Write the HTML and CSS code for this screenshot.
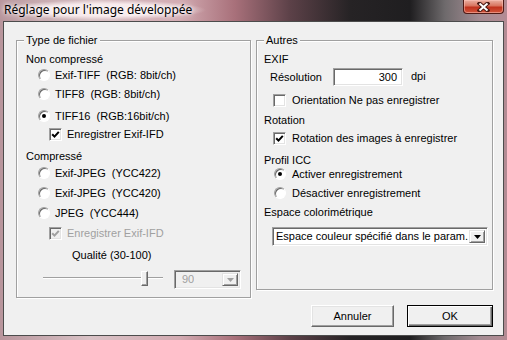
FILE: index.html
```html
<!DOCTYPE html>
<html lang="fr">
<head>
    <meta charset="UTF-8" />
    <title>Réglage pour l'image développée</title>
    <link rel="stylesheet" href="styles.css">
</head>
<body>
    <div class="window">
        <div class="titlebar">
            <span class="title">Réglage pour l'image développée</span>
            <span class="close-btn">
                <svg width="13" height="10" viewBox="0 0 13 10">
                    <path d="M2.5 1.5 L10.5 8.5 M10.5 1.5 L2.5 8.5" stroke="#4a1a14" stroke-width="4" stroke-linecap="square" />
                    <path d="M2.5 1.5 L10.5 8.5 M10.5 1.5 L2.5 8.5" stroke="#fff" stroke-width="2" />
                </svg>
            </span>
        </div>

        <div class="client">
            <div class="groups">
                <div class="group group-file">
                    <span class="group-title">Type de fichier</span>
                    <div class="heading">Non compressé</div>
                    <div class="option radio-option"><span class="radio"></span>Exif-TIFF  (RGB: 8bit/ch)</div>
                    <div class="option radio-option"><span class="radio"></span>TIFF8  (RGB: 8bit/ch)</div>
                    <div class="option radio-option"><span class="radio checked"></span>TIFF16  (RGB:16bit/ch)</div>
                    <div class="option check-option"><span class="check"><svg width="9" height="9" viewBox="0 0 9 9"><path d="M1.2 4.2 L3.5 6.6 L7.8 1.8" /></svg></span>Enregistrer Exif-IFD</div>
                    <div class="heading">Compressé</div>
                    <div class="option radio-option"><span class="radio"></span>Exif-JPEG  (YCC422)</div>
                    <div class="option radio-option"><span class="radio"></span>Exif-JPEG  (YCC420)</div>
                    <div class="option radio-option"><span class="radio"></span>JPEG  (YCC444)</div>
                    <div class="option check-option disabled"><span class="check"><svg width="9" height="9" viewBox="0 0 9 9"><path d="M1.2 4.2 L3.5 6.6 L7.8 1.8" /></svg></span>Enregistrer Exif-IFD</div>
                    <div class="heading quality-label">Qualité (30-100)</div>
                    <div class="quality">
                        <div class="slider"><span class="slider-thumb"></span></div>
                        <div class="combo combo-quality disabled">
                            <span class="combo-text">90</span>
                            <span class="combo-arrow"><svg width="7" height="4" viewBox="0 0 7 4"><path d="M0 0 H7 L3.5 4 Z" /></svg></span>
                        </div>
                    </div>
                </div>

                <div class="group group-other">
                    <span class="group-title">Autres</span>
                    <div class="heading">EXIF</div>
                    <div class="resolution">
                        <span class="resolution-label">Résolution</span>
                        <span class="text-input">300</span>
                        <span class="unit">dpi</span>
                    </div>
                    <div class="option check-option"><span class="check"></span>Orientation Ne pas enregistrer</div>
                    <div class="heading">Rotation</div>
                    <div class="option check-option"><span class="check"><svg width="9" height="9" viewBox="0 0 9 9"><path d="M1.2 4.2 L3.5 6.6 L7.8 1.8" /></svg></span>Rotation des images à enregistrer</div>
                    <div class="heading">Profil ICC</div>
                    <div class="option radio-option"><span class="radio checked"></span>Activer enregistrement</div>
                    <div class="option radio-option"><span class="radio"></span>Désactiver enregistrement</div>
                    <div class="heading">Espace colorimétrique</div>
                    <div class="combo combo-space">
                        <span class="combo-text">Espace couleur spécifié dans le param.</span>
                        <span class="combo-arrow"><svg width="7" height="4" viewBox="0 0 7 4"><path d="M0 0 H7 L3.5 4 Z" /></svg></span>
                    </div>
                </div>
            </div>

            <div class="buttons">
                <button class="btn btn-cancel">Annuler</button>
                <button class="btn btn-default">OK</button>
            </div>
        </div>
    </div>
</body>
</html>
```

FILE: styles.css
```css
* {
    box-sizing: border-box;
}

body {
    margin: 0;
    background: #2b2b2b;
    font-family: "Liberation Sans", Arial, sans-serif;
    font-size: 11px;
    color: #000;
}

.window {
    width: 507px;
    height: 340px;
    display: flex;
    flex-direction: column;
    background: linear-gradient(90deg, #b8959c 0, #d9c2c6 90px, #d2aab1 180px, #a8707a 235px, #5c4148 290px, #262325 350px, #1f1e20 410px, #6e6a6c 445px, #a48c93 480px, #b48b94 507px);
}

/* barre de titre */
.titlebar {
    height: 21px;
    display: flex;
    justify-content: space-between;
    align-items: flex-start;
    padding: 0 3px 0 0;
}

.title {
    padding: 0 14px 0 4px;
    font-family: "Noto Sans", sans-serif;
    font-size: 12px;
    line-height: 20px;
    background: radial-gradient(ellipse closest-side, rgba(250, 236, 238, 0.95) 60%, rgba(250, 236, 238, 0) 100%);
    text-shadow: 0 0 4px #fff, 0 0 8px #fff;
}

.close-btn {
    width: 41px;
    height: 14px;
    display: flex;
    align-items: center;
    justify-content: center;
    border: 1px solid #4f1a15;
    border-top: none;
    border-radius: 0 0 4px 4px;
    background: linear-gradient(#eab0a2, #d8745f 45%, #c0321d 55%, #d2553c);
    box-shadow: inset 0 0 0 1px rgba(255, 200, 190, 0.5);
}

.client {
    flex: 1;
    margin: 0 3px 4px;
    border: 1px solid #4c4c4c;
    background: #f0f0f0;
    display: flex;
    flex-direction: column;
}

/* cadres */
.groups {
    display: flex;
    align-items: flex-start;
    gap: 5px;
    margin: 18px 10px 0 12px;
}

.group {
    position: relative;
    display: grid;
    align-items: start;
    padding-top: 10px;
    border: 1px solid #a0a0a0;
    box-shadow: 1px 1px 0 #fff, inset 1px 1px 0 #fff;
}

.group-file {
    width: 235px;
    height: 258px;
    padding-left: 9px;
    grid-template-rows: 16px 19px 22px 18px 22px 17px 20px 20px 20px 22px 20px 20px;
}

.group-other {
    width: 237px;
    height: 250px;
    padding-left: 7px;
    grid-template-rows: 16px 25px 20px 18px 22px 14px 19px 19px 23px 20px;
}

.group-title {
    position: absolute;
    top: -7px;
    left: 7px;
    padding: 0 2px;
    line-height: 13px;
    background: #f0f0f0;
}

.heading,
.option {
    height: 16px;
    display: flex;
    align-items: center;
    white-space: pre;
}

.group-file .radio-option {
    padding-left: 12px;
    gap: 5px;
}

.group-file .check-option {
    padding-left: 23px;
    gap: 5px;
}

.group-other .radio-option {
    padding-left: 10px;
    gap: 6px;
}

.group-other .check-option {
    padding-left: 9px;
    gap: 6px;
}

.disabled {
    color: #a0a0a0;
}

/* cases et boutons radio */
.radio {
    width: 12px;
    height: 12px;
    flex-shrink: 0;
    display: flex;
    align-items: center;
    justify-content: center;
    border-radius: 50%;
    background: #fff;
    border: 1px solid;
    border-color: #a0a0a0 #fff #fff #a0a0a0;
    box-shadow: inset 1px 1px 0 #696969;
}

.radio.checked::after {
    content: "";
    width: 4px;
    height: 4px;
    border-radius: 50%;
    background: #000;
}

.check {
    width: 13px;
    height: 13px;
    flex-shrink: 0;
    display: flex;
    align-items: center;
    justify-content: center;
    background: #fff;
    border: 1px solid;
    border-color: #a0a0a0 #fff #fff #a0a0a0;
    box-shadow: inset 1px 1px 0 #696969, inset -1px -1px 0 #e3e3e3;
}

.check path {
    fill: none;
    stroke: #000;
    stroke-width: 2;
}

.disabled .check {
    background: #f0f0f0;
}

.disabled .check path {
    stroke: #a0a0a0;
}

/* qualité */
.quality-label {
    padding-left: 46px;
}

.quality {
    display: flex;
    align-items: flex-start;
}

.slider {
    position: relative;
    width: 120px;
    height: 20px;
    margin-left: 17px;
}

.slider::before {
    content: "";
    position: absolute;
    left: 0;
    right: 0;
    top: 10px;
    border-top: 1px solid #a0a0a0;
    border-bottom: 1px solid #fff;
}

.slider-thumb {
    position: absolute;
    left: 98px;
    top: 4px;
    width: 7px;
    height: 15px;
    background: #f0f0f0;
    border: 1px solid;
    border-color: #fff #696969 #696969 #fff;
    box-shadow: inset -1px -1px 0 #a0a0a0;
}

/* listes déroulantes */
.combo {
    height: 19px;
    display: flex;
    align-items: stretch;
    justify-content: space-between;
    padding: 2px;
    background: #fff;
    border: 1px solid;
    border-color: #a0a0a0 #fff #fff #a0a0a0;
    box-shadow: inset 1px 1px 0 #696969, inset -1px -1px 0 #e3e3e3;
}

.combo-text {
    padding-left: 1px;
    line-height: 13px;
    white-space: nowrap;
    overflow: hidden;
}

.combo-arrow {
    width: 16px;
    flex-shrink: 0;
    display: flex;
    align-items: center;
    justify-content: center;
    background: #f0f0f0;
    border: 1px solid;
    border-color: #e3e3e3 #696969 #696969 #e3e3e3;
    box-shadow: inset 1px 1px 0 #fff, inset -1px -1px 0 #a0a0a0;
}

.combo-arrow path {
    fill: #000;
}

.combo-quality {
    width: 67px;
    margin: 3px 0 0 11px;
    background: #f0f0f0;
}

.combo-quality .combo-text {
    padding-left: 5px;
}

.combo-quality .combo-arrow path {
    fill: #a0a0a0;
}

.combo-space {
    width: 216px;
    margin-left: 8px;
}

/* résolution */
.resolution {
    height: 20px;
    display: flex;
    align-items: center;
    padding-left: 6px;
}

.resolution-label {
    width: 63px;
}

.text-input {
    width: 70px;
    height: 18px;
    padding-right: 5px;
    line-height: 16px;
    text-align: right;
    background: #fff;
    border: 1px solid;
    border-color: #a0a0a0 #fff #fff #a0a0a0;
    box-shadow: inset 1px 1px 0 #696969, inset -1px -1px 0 #e3e3e3;
}

.unit {
    margin: 0 0 3px 8px;
}

/* boutons */
.buttons {
    display: flex;
    justify-content: flex-end;
    gap: 13px;
    margin: 7px 10px 0 0;
}

.btn {
    height: 22px;
    padding: 0;
    font: inherit;
    color: #000;
    background: #f0f0f0;
    border: 1px solid;
    border-color: #fff #696969 #696969 #fff;
    box-shadow: inset -1px -1px 0 #a0a0a0, inset 1px 1px 0 #e3e3e3;
}

.btn-cancel {
    width: 83px;
}

.btn-default {
    width: 86px;
    border-color: #000;
    box-shadow: inset 1px 1px 0 #fff, inset -1px -1px 0 #696969, inset -2px -2px 0 #a0a0a0;
}
```
